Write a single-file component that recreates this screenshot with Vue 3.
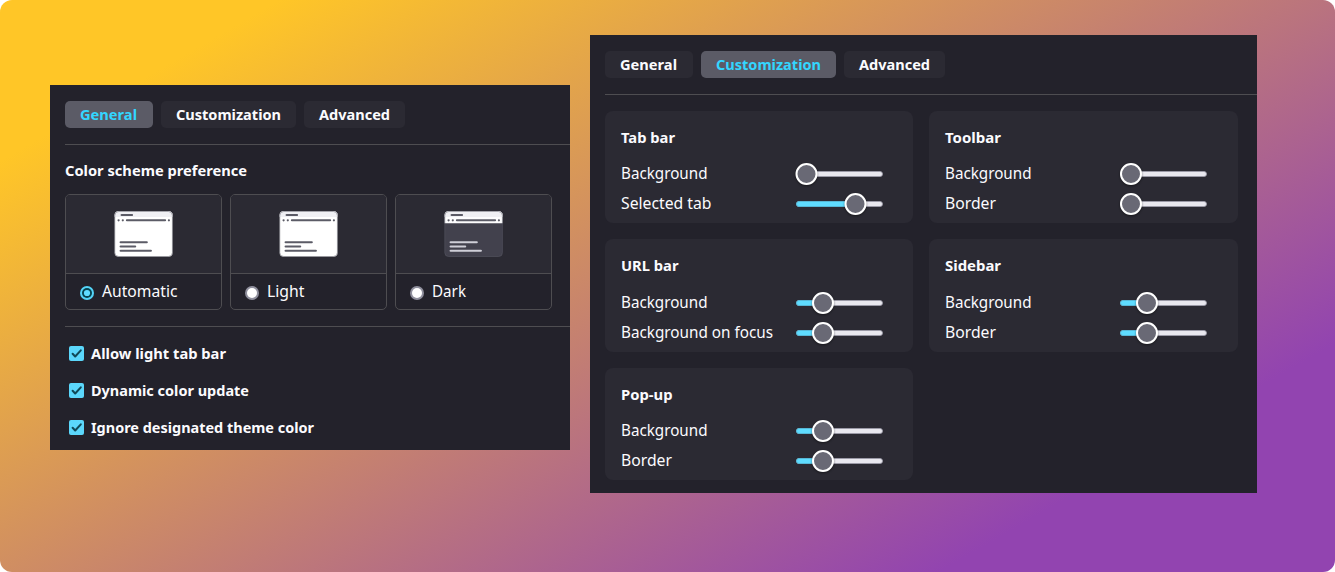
<script setup>
import { h } from 'vue'

const Label = (p) =>
  h('svg', { class: 'label', width: p.w, height: 20 }, [
    h('text', { x: 0, y: 15, textLength: p.w, lengthAdjust: 'spacingAndGlyphs' }, p.text),
  ])
Label.props = ['text', 'w']

const tabs = [
  { text: 'General', w: 57 },
  { text: 'Customization', w: 105 },
  { text: 'Advanced', w: 71 },
]
const schemes = [
  { text: 'Automatic', w: 75.5, checked: true },
  { text: 'Light', w: 37.5 },
  { text: 'Dark', w: 34, dark: true },
]
const options = [
  { text: 'Allow light tab bar', w: 135 },
  { text: 'Dynamic color update', w: 158 },
  { text: 'Ignore designated theme color', w: 223 },
]
const bg = { text: 'Background', w: 86.5 }
const border = { text: 'Border', w: 51 }
const groups = [
  { text: 'Tab bar', w: 54, rows: [{ ...bg, at: 10.5 }, { text: 'Selected tab', w: 90.5, at: 59.5 }] },
  { text: 'Toolbar', w: 56, rows: [{ ...bg, at: 11 }, { ...border, at: 11 }] },
  { text: 'URL bar', w: 57.5, rows: [{ ...bg, at: 27 }, { text: 'Background on focus', w: 152, at: 27 }] },
  { text: 'Sidebar', w: 56, rows: [{ ...bg, at: 27 }, { ...border, at: 27 }] },
  { text: 'Pop-up', w: 51.5, rows: [{ ...bg, at: 27 }, { ...border, at: 27 }] },
]
</script>

<template>
  <main class="stage">
    <section class="panel general">
      <nav class="tabs">
        <button v-for="(t, i) in tabs" :key="t.text" :class="{ active: i === 0 }">
          <Label :text="t.text" :w="t.w" />
        </button>
      </nav>
      <h2><Label text="Color scheme preference" :w="182" /></h2>
      <div class="schemes">
        <div v-for="s in schemes" :key="s.text" class="scheme">
          <div class="preview">
            <svg width="60" height="48" viewBox="0.4 0 60 48">
              <rect x="1" y="1.3" width="58" height="45.4" rx="4" :fill="s.dark ? '#42414d' : '#fff'" />
              <path v-if="s.dark" d="M1 13.2V5.3a4 4 0 0 1 4-4h50a4 4 0 0 1 4 4v7.9z" fill="#fdfdfe" />
              <path d="M1 7V5.3a4 4 0 0 1 4-4h50a4 4 0 0 1 4 4V7z" fill="#f0f0f4" />
              <path d="M8 5h10.5M13.3 10.3h38.2" class="stroke" />
              <g fill="#5b5b66"><circle cx="5" cy="10.3" r="1.1" /><circle cx="9.2" cy="10.3" r="1.1" /><circle cx="55.3" cy="10.3" r="1.1" /></g>
              <path d="M7 32.3h26.2M7 36.5h14.6M7 40.7h30.3" class="stroke" :class="{ pale: s.dark }" />
              <rect x="1.2" y="1.5" width="57.6" height="45" rx="4" fill="none" stroke="#5b5b66" stroke-opacity=".65" stroke-width=".7" />
            </svg>
          </div>
          <div class="choice">
            <svg width="14" height="14" viewBox="0 0 14 14">
              <template v-if="s.checked">
                <circle cx="7" cy="7" r="7" fill="#54d4f8" />
                <circle cx="7" cy="7" r="5" fill="#07434f" />
                <circle cx="7" cy="7" r="3.1" fill="#5fdcff" />
              </template>
              <template v-else>
                <circle cx="7" cy="7" r="7" fill="#8f8f9d" />
                <circle cx="7" cy="7" r="5" fill="#fff" />
              </template>
            </svg>
            <Label :text="s.text" :w="s.w" />
          </div>
        </div>
      </div>
      <div class="options">
        <div v-for="o in options" :key="o.text" class="option">
          <svg width="15" height="15" viewBox="0 0 15 15">
            <rect width="15" height="15" rx="2" fill="#5bd7fb" />
            <path d="M3.6 7.7 6.2 10.5 11.8 4.3" fill="none" stroke="#104957" stroke-width="2" stroke-linecap="round" stroke-linejoin="round" />
          </svg>
          <Label :text="o.text" :w="o.w" />
        </div>
      </div>
    </section>

    <section class="panel custom">
      <nav class="tabs">
        <button v-for="(t, i) in tabs" :key="t.text" :class="{ active: i === 1 }">
          <Label :text="t.text" :w="t.w" />
        </button>
      </nav>
      <div class="groups">
        <div v-for="g in groups" :key="g.text" class="group">
          <h3><Label :text="g.text" :w="g.w" /></h3>
          <div v-for="r in g.rows" :key="r.text" class="row">
            <Label :text="r.text" :w="r.w" />
            <svg class="slider" width="87" height="28" viewBox="0 0 87 28">
              <rect x=".5" y="11.5" width="86" height="5" rx="2.5" fill="#e9e8ef" stroke="#9e9dab" stroke-width=".8" />
              <rect v-if="r.at > 11" x=".5" y="11.5" :width="r.at" height="5" rx="2.5" fill="#5fdcff" stroke="#4cb6d7" stroke-width=".8" />
              <circle :cx="r.at" cy="14" r="10" fill="#696975" stroke="#fff" stroke-width="2" class="thumb" />
            </svg>
          </div>
        </div>
      </div>
    </section>
  </main>
</template>

<style>
body { background: #fff; }
</style>

<style scoped>
.stage {
  box-sizing: border-box;
  width: 1335px;
  height: 572px;
  padding: 35px 50px;
  display: flex;
  align-items: flex-start;
  gap: 20px;
  border-radius: 12px;
  background: linear-gradient(150deg, #ffc627 12%, #9244b0 83%);
  color: #fbfbfe;
  font: 16px "Noto Sans", "Open Sans", sans-serif;
}
.stage svg { display: block; flex: none; overflow: visible; }
.label { fill: currentColor; }
.panel { box-sizing: border-box; background: #23222b; padding: 16px 0 0 15px; }
.general { width: 520px; height: 365px; margin-top: 50px; }
.custom { width: 667px; height: 458px; }
.tabs { display: flex; gap: 8px; height: 43px; border-bottom: 1px solid #4e4d51; }
.tabs button {
  height: 27px;
  padding: 0 15px;
  display: flex;
  align-items: center;
  border: 0;
  border-radius: 5px;
  background: #2b2a33;
  color: #fbfbfe;
  font: bold 15px "Noto Sans", "Open Sans", sans-serif;
}
.tabs button:first-child { width: 88px; }
.tabs .active { background: #5b5b66; color: #33d6ff; }
h2, h3 { margin: 0; font-size: 15px; font-weight: bold; }
h2 { padding: 16px 0 13px; }
.schemes { display: flex; gap: 8px; height: 132px; border-bottom: 1px solid #4e4d51; }
.scheme {
  box-sizing: border-box;
  width: 157px;
  height: 116px;
  border: 1px solid #4e4d51;
  border-radius: 5px;
  overflow: hidden;
}
.preview {
  height: 78px;
  display: flex;
  align-items: center;
  justify-content: center;
  background: #2b2a33;
  border-bottom: 1px solid #4e4d51;
}
.stroke { fill: none; stroke: #5b5b66; stroke-width: 2.1; stroke-linecap: round; }
.pale { stroke: #cfcfd8; }
.choice { display: flex; gap: 8px; padding: 8px 0 0 14px; }
.choice > svg:first-child { margin-top: 4px; }
.options { padding: 17px 0 0 4px; }
.option { display: flex; align-items: flex-start; gap: 7px; height: 37px; font-size: 15px; font-weight: bold; }
.option > svg:first-child { margin-top: 2px; }
.groups { display: grid; grid-template-columns: 308.3px 308.7px; gap: 16px; padding-top: 16px; }
.group { box-sizing: border-box; height: 112.4px; padding: 17px 30px 0 16px; border-radius: 8px; background: #2b2a33; }
.group:nth-child(even) { padding-right: 31px; }
h3 { height: 31.2px; }
.row { display: flex; align-items: center; justify-content: space-between; height: 30.2px; }
.thumb { filter: drop-shadow(0 1px 1px rgb(0 0 0 / 45%)); }
</style>
